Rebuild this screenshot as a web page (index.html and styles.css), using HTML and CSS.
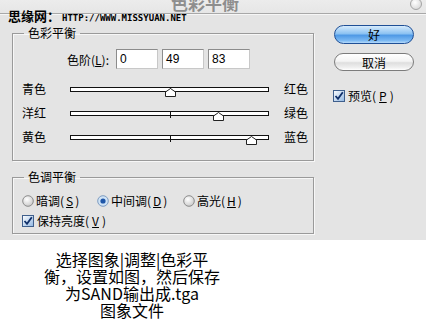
FILE: index.html
```
<!DOCTYPE html>
<html lang="zh">
<head>
<meta charset="utf-8">
<link rel="stylesheet" href="styles.css">
</head>
<body>
<div class="dialog">
  <div class="titlebar">
    <span class="title">色彩平衡</span>
    <span class="close"></span>
  </div>
  <div class="watermark">思缘网：<span class="url">HTTP://WWW.MISSYUAN.NET</span></div>
  <div class="body">
    <div class="left">
      <fieldset class="group g1">
        <legend>色彩平衡</legend>
        <div class="levels">
          <span class="levlab">色阶(<u>L</u>):</span>
          <span class="field">0</span>
          <span class="field">49</span>
          <span class="field">83</span>
        </div>
        <div class="sliders">
          <span class="lab">青色</span>
          <div class="track"><span class="tick"></span><svg class="thumb" style="left:50%" width="11" height="9" viewBox="0 0 11 9"><polygon points="5.5,0.5 10.5,4 10.5,8.5 0.5,8.5 0.5,4" fill="#fff" stroke="#222"/></svg></div>
          <span class="lab">红色</span>
          <span class="lab">洋红</span>
          <div class="track"><span class="tick"></span><svg class="thumb" style="left:74.5%" width="11" height="9" viewBox="0 0 11 9"><polygon points="5.5,0.5 10.5,4 10.5,8.5 0.5,8.5 0.5,4" fill="#fff" stroke="#222"/></svg></div>
          <span class="lab">绿色</span>
          <span class="lab">黄色</span>
          <div class="track"><span class="tick"></span><svg class="thumb" style="left:91.5%" width="11" height="9" viewBox="0 0 11 9"><polygon points="5.5,0.5 10.5,4 10.5,8.5 0.5,8.5 0.5,4" fill="#fff" stroke="#222"/></svg></div>
          <span class="lab">蓝色</span>
        </div>
      </fieldset>
      <fieldset class="group g2">
        <legend>色调平衡</legend>
        <div class="radios">
          <span class="opt"><svg width="12" height="12" viewBox="0 0 12 12"><defs><radialGradient id="rg" cx="0.4" cy="0.35" r="0.7"><stop offset="0" stop-color="#ffffff"/><stop offset="1" stop-color="#c8c8c8"/></radialGradient></defs><circle cx="6" cy="6" r="5.3" fill="url(#rg)" stroke="#8c8c8c"/></svg>暗调(<u>S</u>)</span>
          <span class="opt"><svg width="12" height="12" viewBox="0 0 12 12"><circle cx="6" cy="6" r="5.3" fill="#cfe3f6" stroke="#7f9cc0"/><circle cx="6" cy="6" r="2.6" fill="#1f56a8"/></svg>中间调(<u>D</u>)</span>
          <span class="opt"><svg width="12" height="12" viewBox="0 0 12 12"><circle cx="6" cy="6" r="5.3" fill="url(#rg)" stroke="#8c8c8c"/></svg>高光(<u>H</u>)</span>
        </div>
        <div class="check"><svg width="12" height="12" viewBox="0 0 12 12"><defs><linearGradient id="cg" x1="0" y1="0" x2="1" y2="1"><stop offset="0" stop-color="#ffffff"/><stop offset="1" stop-color="#8fb6e2"/></linearGradient></defs><rect x="0.5" y="0.5" width="11" height="11" fill="url(#cg)" stroke="#3f5f8c"/><path d="M2.5 6 L5 8.8 L9.8 2.2" fill="none" stroke="#10306a" stroke-width="1.8"/></svg>保持亮度(<u>V</u>)</div>
      </fieldset>
    </div>
    <div class="right">
      <div class="btn ok">好</div>
      <div class="btn cancel">取消</div>
      <div class="check preview"><svg width="12" height="12" viewBox="0 0 12 12"><rect x="0.5" y="0.5" width="11" height="11" fill="url(#cg)" stroke="#3f5f8c"/><path d="M2.5 6 L5 8.8 L9.8 2.2" fill="none" stroke="#10306a" stroke-width="1.8"/></svg>预览(<u>P</u>)</div>
    </div>
  </div>
</div>
<div class="caption">选择图象|调整|色彩平<br>衡，设置如图，然后保存<br>为SAND输出成.tga<br>图象文件</div>
</body>
</html>
```
FILE: styles.css
```
html, body {
  margin: 0;
  padding: 0;
  background: #ffffff;
}
body {
  width: 426px;
  height: 336px;
  overflow: hidden;
  font-family: "Noto Sans CJK SC", "Liberation Sans", sans-serif;
  font-size: 12px;
  color: #000;
}
.dialog {
  position: relative;
  height: 240px;
  background: #e4e4e4;
}
.titlebar {
  display: flex;
  height: 13px;
  overflow: hidden;
  border-bottom: 1px solid #a8a8a8;
  box-shadow: 0 1px 0 #f6f6f6;
  background: linear-gradient(#ececec, #e6e6e6);
}
.title {
  margin: -6px 0 0 171px;
  font-size: 17px;
  line-height: 17px;
  font-weight: 700;
  color: #8e8e8e;
  letter-spacing: 0;
}
.close {
  margin: -2px 0 0 auto;
  margin-right: 4px;
  width: 10px;
  height: 10px;
  border: 1px solid #a4a4a4;
  border-radius: 50%;
  background: radial-gradient(circle at 40% 35%, #ffffff, #d0d0d0);
}
.watermark {
  position: absolute;
  left: 8px;
  top: 9px;
  font-size: 13px;
  line-height: 14px;
  font-weight: 700;
  color: #000;
}
.url {
  font-family: "DejaVu Sans Mono", monospace;
  font-size: 9px;
  font-weight: 700;
  margin-left: 2px;
}
.body {
  display: flex;
  align-items: flex-start;
}
.left {
  margin: 12px 0 0 12px;
  width: 302px;
}
.group {
  margin: 0;
  box-sizing: border-box;
  width: 302px;
  border: 1px solid #9a9a9a;
  box-shadow: inset 1px 1px 0 #f7f7f7, 1px 1px 0 #f7f7f7;
  padding: 0 0 0 9px;
}
.group legend {
  margin-left: 2px;
  padding: 0 4px;
  font-size: 12px;
  line-height: 14px;
}
.g1 {
  padding-bottom: 11px;
}
.g2 {
  margin-top: 9px;
  padding-bottom: 4px;
}
.levels {
  display: flex;
  align-items: center;
  gap: 4px;
  margin-top: 9px;
  padding-left: 45px;
  height: 20px;
}
.levlab {
  width: 45px;
}
.field {
  box-sizing: border-box;
  width: 42px;
  height: 20px;
  border: 1px solid #8c8c8c;
  border-bottom-color: #c8c8c8;
  border-right-color: #c8c8c8;
  background: #fff;
  padding-left: 3px;
  font-family: "Liberation Sans", sans-serif;
  font-size: 12px;
  line-height: 18px;
}
.sliders {
  display: grid;
  grid-template-columns: 48px 199px auto;
  grid-auto-rows: 24px;
  column-gap: 15px;
  column-gap: 0;
  align-items: center;
  margin-top: 8px;
}
.sliders .lab:nth-child(3n) {
  padding-left: 15px;
}
.lab {
  line-height: 14px;
}
.track {
  position: relative;
  box-sizing: border-box;
  height: 5px;
  border: 1px solid #111;
  background: #fff;
}
.tick {
  position: absolute;
  left: 50%;
  top: -1px;
  width: 1px;
  height: 7px;
  background: #111;
}
.thumb {
  position: absolute;
  top: 0;
  margin-left: -5px;
  display: block;
}
.radios {
  display: grid;
  grid-template-columns: 75px 86px auto;
  margin-top: 9px;
  height: 16px;
  align-items: center;
}
.opt, .check {
  display: flex;
  align-items: center;
  gap: 2px;
  line-height: 16px;
}
.check {
  margin-top: 4px;
  height: 16px;
  gap: 3px;
}
.opt svg, .check svg {
  display: block;
  flex: none;
}
.right {
  margin: 11px 0 0 20px;
  width: 80px;
}
.btn {
  box-sizing: border-box;
  width: 80px;
  height: 19px;
  border-radius: 10px;
  text-align: center;
  line-height: 17px;
  font-size: 12px;
}
.ok {
  border: 1px solid #1f4f96;
  background: linear-gradient(#d6ebfc 0%, #8cc2f2 45%, #4f99e6 55%, #7ab8f2 85%, #b5dafb 100%);
}
.cancel {
  margin-top: 9px;
  height: 18px;
  border: 1px solid #7c7c7c;
  background: linear-gradient(#ffffff 0%, #f4f4f4 45%, #dedede 55%, #f0f0f0 85%, #ffffff 100%);
}
.preview {
  margin-top: 17px;
  margin-left: -1px;
}
.caption {
  width: 264px;
  padding-top: 11px;
  text-align: center;
  font-size: 16px;
  line-height: 17px;
}
```
